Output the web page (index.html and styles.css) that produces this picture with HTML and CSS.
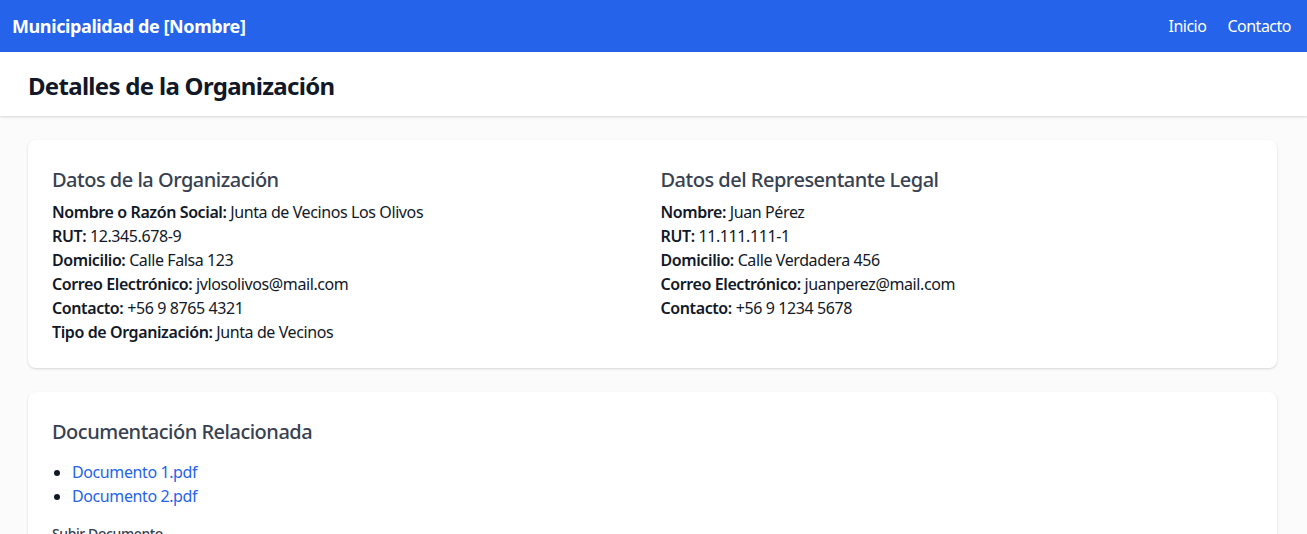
FILE: index.html
```html
<!DOCTYPE html>
<html lang="es">
<head>
<meta charset="utf-8">
<title>Detalles de la Organización</title>
<link rel="stylesheet" href="styles.css">
</head>
<body>
<nav class="nav">
  <div class="brand">Municipalidad de [Nombre]</div>
  <div class="nav-links">
    <a href="#">Inicio</a>
    <a href="#">Contacto</a>
  </div>
</nav>
<header class="page-header">
  <div class="container">
    <h1 class="page-title">Detalles de la Organización</h1>
  </div>
</header>
<main class="container main">
  <section class="card">
    <div class="grid">
      <div>
        <h2 class="card-title">Datos de la Organización</h2>
        <p><strong>Nombre o Razón Social:</strong> Junta de Vecinos Los Olivos</p>
        <p><strong>RUT:</strong> 12.345.678-9</p>
        <p><strong>Domicilio:</strong> Calle Falsa 123</p>
        <p><strong>Correo Electrónico:</strong> jvlosolivos@mail.com</p>
        <p><strong>Contacto:</strong> +56 9 8765 4321</p>
        <p><strong>Tipo de Organización:</strong> Junta de Vecinos</p>
      </div>
      <div>
        <h2 class="card-title">Datos del Representante Legal</h2>
        <p><strong>Nombre:</strong> Juan Pérez</p>
        <p><strong>RUT:</strong> 11.111.111-1</p>
        <p><strong>Domicilio:</strong> Calle Verdadera 456</p>
        <p><strong>Correo Electrónico:</strong> juanperez@mail.com</p>
        <p><strong>Contacto:</strong> +56 9 1234 5678</p>
      </div>
    </div>
  </section>
  <section class="card">
    <h2 class="card-title docs-title">Documentación Relacionada</h2>
    <ul class="doc-list">
      <li><a href="#">Documento 1.pdf</a></li>
      <li><a href="#">Documento 2.pdf</a></li>
    </ul>
    <label class="upload-label">Subir Documento</label>
  </section>
</main>
</body>
</html>
```
FILE: styles.css
```css
* { box-sizing: border-box; }
html, body { margin: 0; padding: 0; }
body {
  font-family: "Noto Sans", "Open Sans", sans-serif;
  font-size: 16px;
  line-height: 24px;
  letter-spacing: -0.4px;
  color: #111827;
  background: #fbfbfb;
}
.nav {
  background: #2563eb;
  color: #fff;
  height: 52px;
  padding: 0 16px 0 12px;
  display: flex;
  align-items: center;
  justify-content: space-between;
}
.brand { font-weight: 700; font-size: 18px; line-height: 28px; }
.nav-links { display: flex; gap: 21px; }
.nav-links a { color: #fff; text-decoration: none; letter-spacing: -0.5px; }
.page-header {
  background: #fff;
  box-shadow: 0 1px 3px rgba(0,0,0,0.1), 0 1px 2px rgba(0,0,0,0.06);
}
.container { padding: 0 30px 0 28px; }
.page-title {
  margin: 0;
  padding: 18px 0 14px;
  font-size: 24px;
  line-height: 32px;
  font-weight: 700;
  letter-spacing: -0.7px;
}
.main { padding-top: 24px; }
.card {
  background: #fff;
  border-radius: 8px;
  box-shadow: 0 1px 3px rgba(0,0,0,0.1), 0 1px 2px rgba(0,0,0,0.06);
  padding: 24px;
  margin-bottom: 24px;
}
.grid { display: grid; grid-template-columns: 1fr 1fr; gap: 16px; }
.card-title {
  margin: 0 0 6px;
  padding-top: 2px;
  font-size: 20px;
  line-height: 28px;
  font-weight: 500;
  color: #374151;
  letter-spacing: -0.5px;
}
.docs-title { margin-bottom: 14px; }
.card p { margin: 0; }
.card strong { font-weight: 600; }
.doc-list { margin: 0; padding-left: 20px; list-style: disc; }
.doc-list a { color: #2563eb; text-decoration: none; }
.upload-label {
  display: block;
  margin-top: 16px;
  font-size: 14px;
  line-height: 20px;
  font-weight: 500;
  color: #374151;
}
```
